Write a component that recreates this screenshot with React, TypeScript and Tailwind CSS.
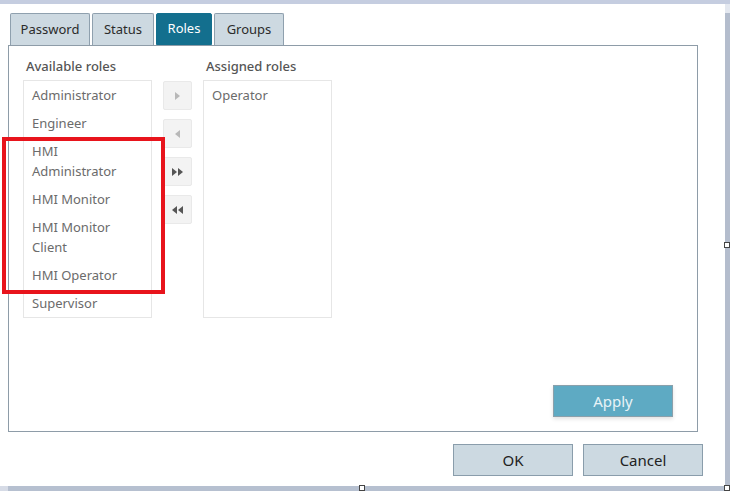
import React from 'react';

const available = ['Administrator', 'Engineer', 'HMI Administrator', 'HMI Monitor', 'HMI Monitor Client', 'HMI Operator', 'Supervisor'];
const assigned = ['Operator'];
const tabs = [
    { name: 'Password', w: 'w-[80px]' },
    { name: 'Status', w: 'w-[62px]' },
    { name: 'Roles', w: 'w-[56px]' },
    { name: 'Groups', w: 'w-[70px]' },
];

function Arrow({ dir, double, active }: { dir: 'right' | 'left'; double?: boolean; active?: boolean }) {
    const fill = active ? '#555555' : '#b8b8b8';
    const tri = dir === 'right' ? 'M0 0 L5 4 L0 8 Z' : 'M5 0 L0 4 L5 8 Z';
    return (
        <button className="w-[29px] h-[29px] bg-[#f3f3f3] border border-[#e9e9e9] rounded-[2px] flex items-center justify-center">
            <svg width={double ? 11 : 6} height="8" viewBox={double ? '0 0 11 8' : '0 0 6 8'}>
                <path d={tri} fill={fill} />
                {double && <path d={tri} fill={fill} transform="translate(6 0)" />}
            </svg>
        </button>
    );
}

function RoleList({ items }: { items: string[] }) {
    return (
        <div className="w-[129px] h-[238px] border border-[#e6e6e6] bg-white">
            {items.map((r) => (
                <div key={r} className="pl-2 pr-2 py-1 leading-5 text-[13px] text-[#6b6b6b]">
                    {r}
                </div>
            ))}
        </div>
    );
}

function Handle({ className }: { className: string }) {
    return <div className={`absolute w-[6px] h-[6px] bg-white border border-[#444] ${className}`} />;
}

export default function App() {
    return (
        <div className="relative w-[730px] h-[491px] bg-[#c5cde0] overflow-hidden" style={{ fontFamily: '"Noto Sans", "Open Sans", sans-serif' }}>
            <div className="h-[4px]" />
            <div className="flex h-[482px]">
                <div className="w-[725px] bg-white flex flex-col">
                    {/* Tabs */}
                    <div className="flex gap-[2px] pl-[10px] pt-[9px] h-[41px]">
                        {tabs.map((t) => (
                            <div
                                key={t.name}
                                className={
                                    t.name === 'Roles'
                                        ? `${t.w} h-[32px] flex items-center justify-center text-[13px] rounded-t-[2px] border border-[#136f8e] bg-[#136f8e] text-white relative z-10`
                                        : `${t.w} h-[32px] flex items-center justify-center text-[13px] rounded-t-[2px] border border-b-0 border-[#8fa0ae] bg-[#cdd9e1] text-[#2b2b2b] relative z-10`
                                }
                            >
                                {t.name}
                            </div>
                        ))}
                    </div>
                    {/* Panel */}
                    <div className="ml-[8px] w-[690px] h-[387px] border border-[#8e9ca8] flex flex-col">
                        <div className="flex pl-[14px] pt-[9px]">
                            <div className="flex flex-col">
                                <div className="h-[25px] pl-[3px] text-[13px] font-medium text-[#555] leading-[22px]">Available roles</div>
                                <RoleList items={available} />
                            </div>
                            <div className="flex flex-col gap-[9px] ml-[11px] mt-[26px]">
                                <Arrow dir="right" />
                                <Arrow dir="left" />
                                <Arrow dir="right" double active />
                                <Arrow dir="left" double active />
                            </div>
                            <div className="flex flex-col ml-[11px]">
                                <div className="h-[25px] pl-[3px] text-[13px] font-medium text-[#555] leading-[22px]">Assigned roles</div>
                                <RoleList items={assigned} />
                            </div>
                        </div>
                        <div className="flex-1" />
                        <div className="flex justify-end pr-[24px] pb-[14px]">
                            <button className="w-[120px] h-[32px] bg-[#5eaac3] border border-[#8aa0ab] text-[#e8f3f7] text-[15px] shadow-[0_2px_4px_rgba(0,0,0,0.12)]">
                                Apply
                            </button>
                        </div>
                    </div>
                    <div className="flex justify-end gap-[10px] pr-[22px] pt-[12px]">
                        <button className="w-[120px] h-[32px] bg-[#ccd9e1] border border-[#8a9dab] text-[15px] text-[#222]">OK</button>
                        <button className="w-[120px] h-[32px] bg-[#ccd9e1] border border-[#8a9dab] text-[15px] text-[#222]">Cancel</button>
                    </div>
                </div>
                <div className="w-[5px] flex flex-col">
                    <div className="h-[9px] bg-[#e4e8f0]" />
                    <div className="flex-1 bg-[#b4bdcd]" />
                </div>
            </div>
            <div className="flex h-[5px]">
                <div className="w-[8px] bg-[#d6dbe6]" />
                <div className="flex-1 bg-[#b6c0d0]" />
            </div>

            {/* annotation */}
            <div className="absolute left-[2px] top-[137px] w-[163px] h-[157px] border-4 border-[#e8141c]" />
            <Handle className="left-[724px] top-[242px]" />
            <Handle className="left-[359px] top-[485px]" />
            <Handle className="left-[724px] top-[485px]" />
        </div>
    );
}
